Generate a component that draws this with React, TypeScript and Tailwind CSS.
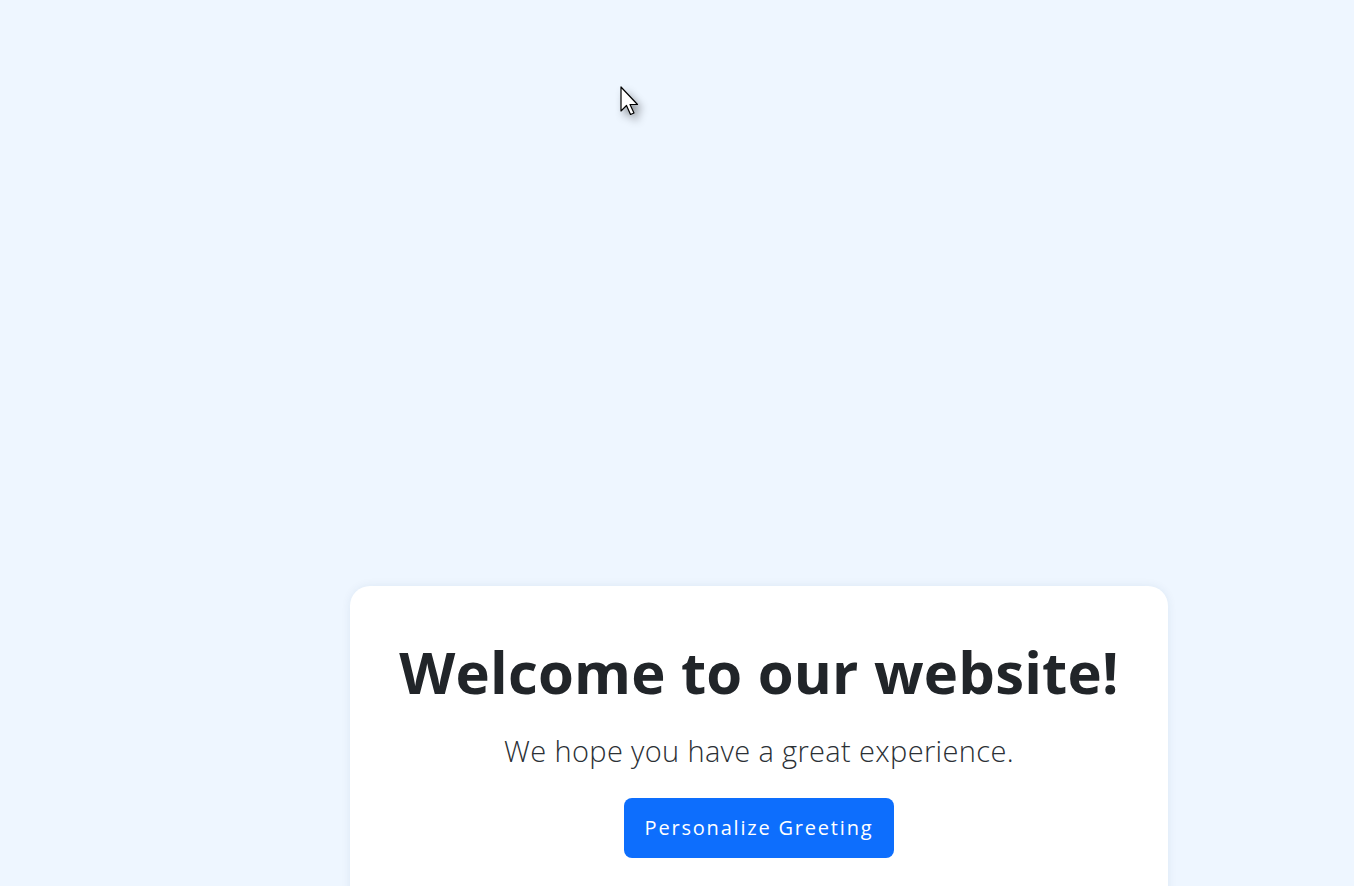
import { useState } from 'react'

function Cursor() {
  return (
    <svg className="absolute left-[620px] top-[86px] drop-shadow-[4px_5px_4px_rgba(0,0,0,0.4)]" width="22" height="34" viewBox="0 0 22 34">
      <path d="M1 1 L1 25 L6.5 19.5 L10.5 28.5 L14 27 L10 18.5 L17.5 18.5 Z" fill="#fff" stroke="#000" strokeWidth="1.2" strokeLinejoin="round" />
    </svg>
  )
}

export default function App() {
  const [name, setName] = useState('')

  return (
    <div className="relative min-h-[886px] overflow-hidden bg-[#eef6ff] font-['Open_Sans',sans-serif] text-[#212529]">
      <Cursor />
      <div className="pl-[350px] pt-[586px]">
        <div className="w-[818px] h-[400px] rounded-[20px] bg-white shadow-[0_0_10px_rgba(30,60,120,0.08)] flex flex-col items-center pt-[51px]">
          <h1 className="text-[58px] leading-[1.2] font-bold tracking-[0.2px]">
            Welcome to our website{name ? `, ${name}` : ''}!
          </h1>
          <p className="mt-[22px] text-[29px] leading-[1.5] font-light tracking-[0.35px] text-[#2b3035]">
            We hope you have a great experience.
          </p>
          <button
            onClick={() => setName(name ? '' : name)}
            className="mt-[26px] h-[60px] px-[21px] rounded-[8px] bg-[#0d6efd] text-white text-[20px] font-normal tracking-[1.8px] hover:bg-[#0b5ed7] transition-colors"
          >
            Personalize Greeting
          </button>
        </div>
      </div>
    </div>
  )
}
